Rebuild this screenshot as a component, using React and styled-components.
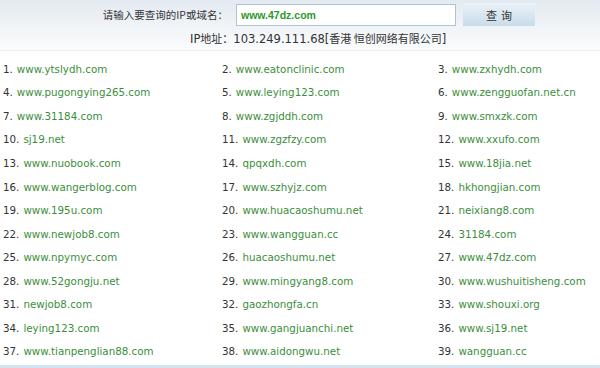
import styled, { createGlobalStyle } from 'styled-components';

const GlobalStyle = createGlobalStyle`
  html, body {
    margin: 0;
    padding: 0;
    background: #fff;
  }
  body {
    font-family: "DejaVu Sans", Verdana, sans-serif;
    color: #333;
  }
`;

const Page = styled.div`
  width: 600px;
  height: 368px;
  overflow: hidden;
  display: flex;
  flex-direction: column;
  border-bottom: 3px solid #d3e3f0;
  box-sizing: border-box;
`;

const Header = styled.div`
  height: 51px;
  background: linear-gradient(#e4eaf1, #fbfcfd);
  border-bottom: 1px solid #eef0f2;
  display: flex;
  flex-direction: column;
  box-sizing: border-box;
  padding-top: 3px;
`;

const SearchRow = styled.form`
  display: flex;
  align-items: center;
  padding-left: 100px;
  height: 23px;
  margin: 0;
`;

const Label = styled.span`
  font-family: "Noto Sans CJK SC", sans-serif;
  font-size: 10.5px;
  color: #333;
  width: 128px;
  flex-shrink: 0;
  text-align: right;
  white-space: nowrap;
`;

const Input = styled.input`
  margin-left: 8px;
  width: 220px;
  height: 22px;
  box-sizing: border-box;
  border: 1px solid #a9c4d6;
  background: #fff;
  padding: 0 4px;
  font-family: "Liberation Sans", Arial, sans-serif;
  font-weight: bold;
  font-size: 10.5px;
  color: #2b9a2b;
  outline: none;
`;

const Button = styled.button`
  margin-left: 7px;
  width: 72px;
  height: 23px;
  border: 0;
  background: linear-gradient(#eaf2f8, #c9dcea);
  font-family: "Noto Sans CJK SC", sans-serif;
  font-size: 11px;
  color: #333;
  letter-spacing: 4px;
  padding: 0 0 0 4px;
`;

const IpLine = styled.div`
  padding-left: 190px;
  margin-top: 4px;
  font-size: 11.5px;
  color: #333;
  font-family: "DejaVu Sans", "Noto Sans CJK SC", sans-serif;
  white-space: nowrap;
`;

const Cjk = styled.span`
  font-family: "Noto Sans CJK SC", sans-serif;
  font-size: 11px;
`;

const List = styled.ol`
  list-style: none;
  margin: 0;
  padding: 6px 0 0 3px;
  display: grid;
  grid-template-columns: 219px 216px 1fr;
  grid-auto-rows: 23.55px;
  align-items: center;
`;

const Item = styled.li`
  font-size: 10.3px;
  white-space: nowrap;
  color: #333;
`;

const Domain = styled.a`
  color: #3b8e3b;
  text-decoration: none;
  margin-left: 4px;
`;

const domains = [
  'www.ytslydh.com', 'www.eatonclinic.com', 'www.zxhydh.com',
  'www.pugongying265.com', 'www.leying123.com', 'www.zengguofan.net.cn',
  'www.31184.com', 'www.zgjddh.com', 'www.smxzk.com',
  'sj19.net', 'www.zgzfzy.com', 'www.xxufo.com',
  'www.nuobook.com', 'qpqxdh.com', 'www.18jia.net',
  'www.wangerblog.com', 'www.szhyjz.com', 'hkhongjian.com',
  'www.195u.com', 'www.huacaoshumu.net', 'neixiang8.com',
  'www.newjob8.com', 'www.wangguan.cc', '31184.com',
  'www.npymyc.com', 'huacaoshumu.net', 'www.47dz.com',
  'www.52gongju.net', 'www.mingyang8.com', 'www.wushuitisheng.com',
  'newjob8.com', 'gaozhongfa.cn', 'www.shouxi.org',
  'leying123.com', 'www.gangjuanchi.net', 'www.sj19.net',
  'www.tianpenglian88.com', 'www.aidongwu.net', 'wangguan.cc',
];

export default function App() {
  return (
    <>
      <GlobalStyle />
      <Page>
        <Header>
          <SearchRow onSubmit={e => e.preventDefault()}>
            <Label>请输入要查询的IP或域名：</Label>
            <Input defaultValue="www.47dz.com" />
            <Button type="submit">查询</Button>
          </SearchRow>
          <IpLine>
            IP<Cjk>地址：</Cjk>103.249.111.68[<Cjk>香港 恒创网络有限公司</Cjk>]
          </IpLine>
        </Header>
        <List>
          {domains.map((d, i) => (
            <Item key={d + i}>
              {i + 1}.<Domain href="#">{d}</Domain>
            </Item>
          ))}
        </List>
      </Page>
    </>
  );
}
